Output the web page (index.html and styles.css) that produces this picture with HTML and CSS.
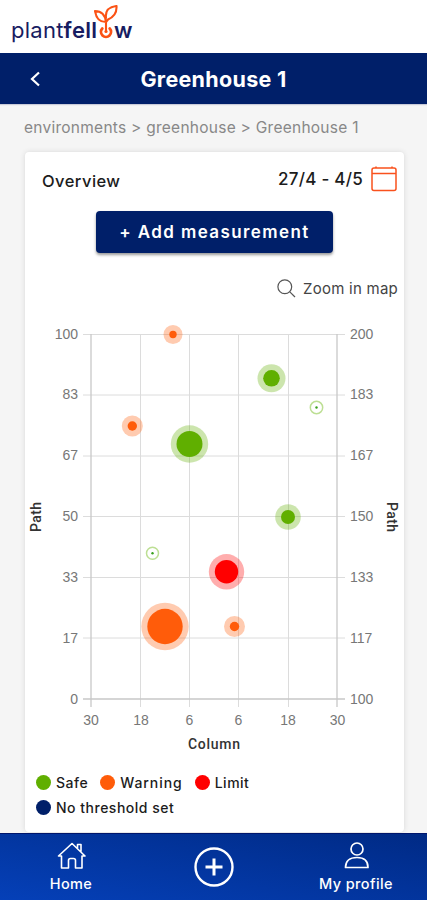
FILE: index.html
```html
<!DOCTYPE html>
<html lang="en">
<head>
<meta charset="utf-8">
<title>Greenhouse 1</title>
<link rel="stylesheet" href="styles.css">
</head>
<body>
<div class="app">
  <header class="brand">
    <span class="logo">plant<b>fell</b></span>
    <svg class="sprout" width="25" height="36" viewBox="0 0 25 36" fill="none" stroke="#fb5214" stroke-width="2.100" stroke-linecap="round" stroke-linejoin="round">
      <path d="M12 26V16M12 17C4 17 2 12 1 6C7 6 11 9 12 17ZM12 13C11 5 15 2 22.500 1C23 8 20 12 14 14.500L12 17"/>
      <path d="M8.300 23.500A5 5 0 1 0 15.700 23.500" stroke-width="2.800"/>
      <circle cx="12" cy="26.500" r="1.600" fill="#fb5214" stroke="none"/>
    </svg>
    <span class="logo logo-end"><b>w</b></span>
  </header>
  <div class="titlebar">
    <svg class="back" width="12" height="16" viewBox="0 0 12 16" fill="none" stroke="#fff" stroke-width="2.200"><path d="M11 1.500L4 8L11 14.500"/></svg>
    <h1>Greenhouse 1</h1>
  </div>
  <nav class="crumbs">environments &gt; greenhouse &gt; Greenhouse 1</nav>
  <main class="card">
    <div class="card-head">
      <h2>Overview</h2>
      <span class="range">27/4 - 4/5</span>
      <svg width="26" height="26" viewBox="0 0 26 26" fill="none" stroke="#f9511d" stroke-width="1.500"><rect x="1" y="2" width="24" height="22.500" rx="2"/><path d="M1 7.500H25M5 .5V2M21 .5V2"/></svg>
    </div>
    <button class="add">+ Add measurement</button>
    <div class="zoom">
      <svg width="19" height="19" viewBox="0 0 19 19" fill="none" stroke="#555" stroke-width="1.200"><circle cx="7.800" cy="7.800" r="6.900"/><path d="M12.800 12.800L18 18"/></svg>
      <span>Zoom in map</span>
    </div>
    <svg class="chart" width="379" height="450" viewBox="25 310 379 450">
      <g class="grid">
        <path d="M140.500 334V707M189.500 334V707M238.500 334V707M288.500 334V707"/>
        <path d="M83 334.500H345M83 395H345M83 456H345M83 516.500H345M83 577.500H345M83 638H345"/>
        <path class="edge" d="M91 334V707M337 334V707M83 699H345"/>
      </g>
      <g class="tick left">
        <text x="78" y="338.500">100</text><text x="78" y="399">83</text><text x="78" y="460">67</text><text x="78" y="521">50</text><text x="78" y="582">33</text><text x="78" y="643">17</text><text x="78" y="704">0</text>
      </g>
      <g class="tick">
        <text x="350" y="338.500">200</text><text x="350" y="399">183</text><text x="350" y="460">167</text><text x="350" y="521">150</text><text x="350" y="582">133</text><text x="350" y="643">117</text><text x="350" y="704">100</text>
      </g>
      <g class="tick mid">
        <text x="91" y="725">30</text><text x="141" y="725">18</text><text x="189.500" y="725">6</text><text x="238.500" y="725">6</text><text x="288" y="725">18</text><text x="337.500" y="725">30</text>
      </g>
      <g class="axis">
        <text x="214" y="749" textLength="52">Column</text>
        <text transform="translate(41 517) rotate(-90)" textLength="30">Path</text>
        <text transform="translate(387 517) rotate(90)" textLength="30">Path</text>
      </g>
      <g class="warning">
        <circle class="halo" cx="173" cy="334.500" r="9.500"/><circle cx="173" cy="334.500" r="3.700"/>
        <circle class="halo" cx="132.300" cy="426" r="10.500"/><circle cx="132.300" cy="426" r="4.700"/>
        <circle class="halo" cx="165" cy="626.500" r="23.700"/><circle cx="165" cy="626.500" r="17.700"/>
        <circle class="halo" cx="234.500" cy="626.500" r="10.500"/><circle cx="234.500" cy="626.500" r="4.700"/>
      </g>
      <g class="safe">
        <circle class="halo" cx="189.500" cy="444" r="18.700"/><circle cx="189.500" cy="444" r="13"/>
        <circle class="halo" cx="271.500" cy="378.300" r="14"/><circle cx="271.500" cy="378.300" r="8.300"/>
        <circle class="halo" cx="288" cy="517" r="12.800"/><circle cx="288" cy="517" r="7"/>
      </g>
      <g class="limit">
        <circle class="halo" cx="226.500" cy="571.800" r="17.700"/><circle cx="226.500" cy="571.800" r="11.700"/>
      </g>
      <g class="small">
        <circle cx="316.500" cy="407.500" r="6.200"/><circle class="dot" cx="316.500" cy="407.500" r="1.200"/>
        <circle cx="152.500" cy="553.300" r="6"/><circle class="dot" cx="152.500" cy="553.300" r="1.200"/>
      </g>
    </svg>
    <ul class="legend">
      <li class="k-safe">Safe</li><li class="k-warning">Warning</li><li class="k-limit">Limit</li><li class="k-none">No threshold set</li>
    </ul>
  </main>
  <footer class="tabs">
    <a class="tab home">
      <svg width="30" height="28" viewBox="0 0 30 28" fill="none" stroke="#fff" stroke-width="1.600" stroke-linejoin="round" stroke-linecap="round"><path d="M2.500 14L16 1.500L29 14H26V26H19.500V18.500Q19.500 16.500 17.500 16.500H14.500Q12.500 16.500 12.500 18.500V26H5.500V14ZM21.500 6V2.500H25V9.500"/></svg>
      <span>Home</span>
    </a>
    <a class="tab plus">
      <svg width="40" height="40" viewBox="0 0 40 40" fill="none" stroke="#fff"><circle cx="20" cy="20" r="18.500" stroke-width="2.400"/><path d="M20 11.500V28.500M11.500 20H28.500" stroke-width="3"/></svg>
    </a>
    <a class="tab profile">
      <svg width="26" height="28" viewBox="0 0 26 28" fill="none" stroke="#fff" stroke-width="1.700" stroke-linejoin="round"><circle cx="14" cy="7" r="6"/><path d="M2.500 25.500C2.500 19 6.500 15.500 14 15.500S25 19 25 25.500Z"/></svg>
      <span>My profile</span>
    </a>
  </footer>
</div>
</body>
</html>
```
FILE: styles.css
```css
* { box-sizing: border-box; }
body { margin: 0; background: #f5f5f5; font-family: Inter, "Liberation Sans", sans-serif; color: #1c1c1c; }
.app { width: 427px; height: 900px; display: flex; flex-direction: column; overflow: hidden; }
h1, h2, ul { margin: 0; padding: 0; }
.brand { height: 53px; flex: none; background: #fff; display: flex; align-items: flex-start; padding: 5px 0 0 11px; }
.logo { color: #171c61; font-size: 22px; line-height: 26px; padding-top: 12px; width: 89px; letter-spacing: .25px; white-space: nowrap; }
.logo b { font-weight: 600; }
.sprout { flex: none; margin-left: -6px; }
.logo-end { width: auto; margin-left: -5px; }
.titlebar { height: 51px; flex: none; background: #001f69; color: #fff; display: grid; grid-template-columns: 60px 1fr 60px; align-items: center; text-align: center; box-shadow: 0 1px 1px #c9cbd8; }
.back { margin-left: 28px; }
h1 { font-size: 21.5px; font-weight: 700; white-space: nowrap; letter-spacing: .3px; }
.crumbs { height: 48px; flex: none; padding-left: 24px; line-height: 48px; font-size: 15.5px; letter-spacing: .26px; color: #888; white-space: nowrap; }
.card { width: 379px; height: 680px; flex: none; margin: 0 0 1px 25px; background: #fff; border-radius: 4px; box-shadow: 0 0 5px #d8d8d8; display: flex; flex-direction: column; }
.card-head { height: 59px; display: flex; align-items: center; padding: 0 7px 5px 17px; flex: none; }
h2 { font-size: 16.5px; font-weight: 500; letter-spacing: .45px; flex: 1; padding-top: 4px; }
.range { font-size: 17px; font-weight: 500; letter-spacing: .25px; margin-right: 8px; }
.add { width: 237px; height: 42px; flex: none; margin-left: 71px; padding: 0; border: 0; border-radius: 4px; background: #001f69; color: #fff; font: 600 17px Inter, sans-serif; letter-spacing: 1.4px; box-shadow: 0 2px 3px #999; }
.zoom { height: 57px; flex: none; display: flex; align-items: center; justify-content: flex-end; gap: 7px; padding: 14px 6px 0 0; font-size: 15px; letter-spacing: .25px; color: #444; }
.chart { display: block; flex: none; }
.grid { fill: none; stroke: #dcdcdc; stroke-width: 1; }
.edge { stroke: #c8c8c8; stroke-width: 1.300; }
.tick { font: 14px "Liberation Sans", sans-serif; fill: #777; }
.left { text-anchor: end; }
.mid, .axis { text-anchor: middle; }
.axis { font: 500 14px Roboto, sans-serif; fill: #333; }
.halo { opacity: .32; }
.warning { fill: #ff5c0a; }
.safe { fill: #60af00; }
.limit { fill: #f00; }
.small { fill: #fff; stroke: #bddf94; stroke-width: 1.500; }
.dot { fill: #37a01b; stroke: none; }
.legend { list-style: none; display: flex; flex-wrap: wrap; gap: 0 12px; padding: 10px 0 0 11px; width: 290px; font-size: 14px; font-weight: 500; letter-spacing: .5px; line-height: 25px; }
.legend li { display: flex; align-items: center; gap: 5px; }
.legend li::before { content: ""; width: 15px; height: 15px; border-radius: 50%; background: #60af00; }
.legend .k-warning { letter-spacing: .95px; }
.legend .k-warning::before { background: #ff5c0a; }
.legend .k-limit::before { background: #f00; }
.legend .k-none::before { background: #001f69; }
.tabs { height: 67px; flex: none; display: grid; grid-template-columns: 142px 143px 142px; background: linear-gradient(190deg, #002a85, #0540b8); border-top: 1px solid #00166c; color: #fff; font-size: 14.5px; font-weight: 500; letter-spacing: .4px; position: relative; }
.tab { display: flex; flex-direction: column; align-items: center; padding-top: 8px; line-height: 17px; gap: 5px; }
.plus { padding-top: 13px; }
```
